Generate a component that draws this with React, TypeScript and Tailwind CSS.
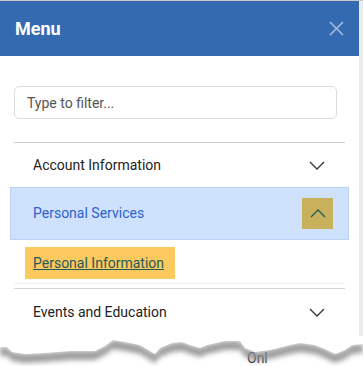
import { useState } from "react";

const tear = [
  [0, 347], [7, 347], [12, 352], [25, 354], [45, 353], [70, 351], [95, 351],
  [105, 346], [113, 340], [125, 342], [140, 345], [150, 351], [155, 354],
  [160, 348], [172, 343], [182, 342], [190, 345], [200, 348], [207, 345],
  [225, 341], [240, 341], [245, 348], [255, 352], [270, 350], [290, 345],
  [300, 343], [315, 345], [325, 349], [335, 354], [345, 350], [352, 345],
  [363, 344],
];

const Chevron = ({ up = false, color = "#333" }: { up?: boolean; color?: string }) => (
  <svg width="16" height="9" viewBox="0 0 16 9" fill="none">
    <polyline
      points={up ? "1,8 8,1 15,8" : "1,1 8,8 15,1"}
      stroke={color}
      strokeWidth="1.3"
    />
  </svg>
);

const TornEdge = () => {
  const top = 336;
  const pts = tear.map(([x, y]) => `${x},${y - top}`).join(" ");
  const lower = [...tear]
    .reverse()
    .map(([x, y]) => `${x},${y - top + 9}`)
    .join(" ");
  return (
    <svg
      className="absolute left-0 top-[336px]"
      width="363"
      height="30"
      viewBox="0 0 363 30"
    >
      <defs>
        <filter id="blur" x="-10%" y="-50%" width="120%" height="200%">
          <feGaussianBlur stdDeviation="2.6" />
        </filter>
        <linearGradient id="fade" x1="0" y1="0" x2="0" y2="1">
          <stop offset="0" stopColor="#7a7a7a" />
          <stop offset="1" stopColor="#d8d8d8" />
        </linearGradient>
      </defs>
      <rect x="0" y="0" width="363" height="30" fill="#ffffff" />
      <text
        x="247"
        y="27"
        fontSize="14"
        fill="#333"
        fontFamily="Roboto, sans-serif"
      >
        Onl
      </text>
      <polygon
        points={`${pts} ${lower}`}
        fill="#8c8c8c"
        opacity="0.85"
        filter="url(#blur)"
      />
      <polygon points={`0,0 ${pts} 363,0`} fill="#ffffff" />
    </svg>
  );
};

const App = () => {
  const [filter, setFilter] = useState("");
  return (
    <div className="relative h-[366px] w-[363px] overflow-hidden bg-white font-['Roboto',sans-serif]">
      <div className="flex h-full border-t border-[#c9c9c9]">
        <div className="w-[359px]">
          <header className="flex h-[55px] items-center justify-between bg-[#336ab0] pl-[15px] pr-[15px]">
            <h1 className="text-[18px] font-bold text-white">Menu</h1>
            <svg width="15" height="15" viewBox="0 0 15 15">
              <path d="M1 1L14 14M14 1L1 14" stroke="#a3bde0" strokeWidth="1.6" />
            </svg>
          </header>
          <div className="px-[14px] pt-[30px]">
            <input
              value={filter}
              onChange={(e) => setFilter(e.target.value)}
              placeholder="Type to filter..."
              className="h-[33px] w-[323px] rounded-[5px] border border-[#dcdcdc] px-[12px] text-[14px] text-[#333] outline-none placeholder:text-[#555]"
            />
            <div className="mt-[23px] border-t border-[#cfcfcf]">
              <div className="flex h-[44px] items-center justify-between pl-[19px] pr-[20px]">
                <span className="text-[14px] text-[#222]">Account Information</span>
                <Chevron />
              </div>
              <div className="-mx-[4px] flex h-[53px] items-center justify-between border border-[#b9d3f6] bg-[#cfe2fd] pl-[22px] pr-[15px]">
                <span className="text-[14px] text-[#2d5fcf]">Personal Services</span>
                <div className="flex h-[31px] w-[31px] items-center justify-center bg-[#c9b15b]">
                  <Chevron up color="#1d5a5a" />
                </div>
              </div>
              <div className="pb-[3px] pl-[11px] pt-[7px]">
                <a className="inline-flex h-[32px] w-[150px] items-center bg-[#fcc95e] pl-[8px] text-[14px] text-[#1e5b5c] underline">
                  Personal Information
                </a>
              </div>
              <div className="mt-[1px] border-t border-[#f0f0f0]" />
              <div className="mt-[4px] border-t border-[#d4d4d4]">
                <div className="flex h-[47px] items-center justify-between pl-[19px] pr-[20px]">
                  <span className="text-[14px] text-[#222]">Events and Education</span>
                  <Chevron />
                </div>
              </div>
              <div className="border-t border-[#d4d4d4]" />
            </div>
          </div>
        </div>
        <div className="w-[4px] bg-[#ececec]" />
      </div>
      <TornEdge />
    </div>
  );
};

export default App;
